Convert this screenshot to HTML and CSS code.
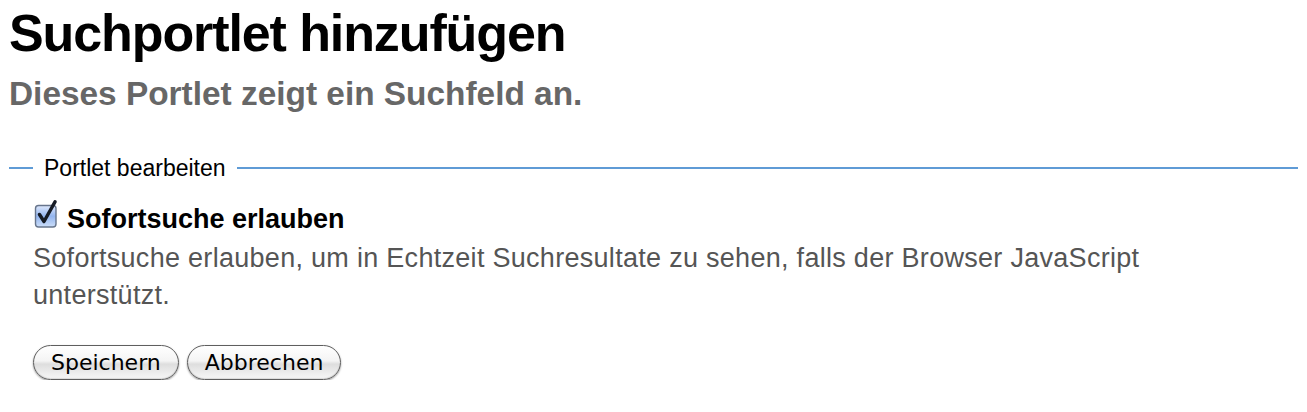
FILE: index.html
```html
<!DOCTYPE html>
<html lang="de">
<head>
<meta charset="utf-8">
<title>Suchportlet hinzufügen</title>
<link rel="stylesheet" href="styles.css">
</head>
<body>
<main class="page">
  <h1 class="title">Suchportlet hinzufügen</h1>
  <p class="lead">Dieses Portlet zeigt ein Suchfeld an.</p>
  <form class="form">
    <fieldset class="fieldset">
      <legend class="legend">Portlet bearbeiten</legend>
      <div class="field">
        <label class="check-label">
          <span class="checkbox" aria-hidden="true">
            <svg width="24" height="28" viewBox="0 0 24 28">
              <defs>
                <linearGradient id="cbg" x1="0" y1="0" x2="0" y2="1">
                  <stop offset="0" stop-color="#dfe9fc"/>
                  <stop offset="0.5" stop-color="#93b5ef"/>
                  <stop offset="1" stop-color="#cddff9"/>
                </linearGradient>
              </defs>
              <rect x="2.5" y="5.5" width="20.5" height="21.5" rx="3" fill="url(#cbg)" stroke="#67758c" stroke-width="1.4"/>
              <path d="M6.5 14.5 L11 21.5 L22 1.8" fill="none" stroke="#161b24" stroke-width="3.4" stroke-linecap="round" stroke-linejoin="round"/>
            </svg>
          </span>
          <span class="check-text">Sofortsuche erlauben</span>
        </label>
        <div class="help">Sofortsuche erlauben, um in Echtzeit Suchresultate zu sehen, falls der Browser JavaScript unterstützt.</div>
      </div>
      <div class="actions">
        <button type="button" class="btn">Speichern</button>
        <button type="button" class="btn">Abbrechen</button>
      </div>
    </fieldset>
  </form>
</main>
</body>
</html>
```
FILE: styles.css
```css
html, body {
  margin: 0;
  padding: 0;
  background: #fff;
}
body {
  font-family: "Liberation Sans", Arial, sans-serif;
  color: #000;
}
.page {
  padding: 0 9px;
}
.title {
  margin: 0;
  padding-top: 3px;
  font-size: 52px;
  line-height: 60px;
  font-weight: bold;
  letter-spacing: -1.1px;
}
.lead {
  margin: 11px 0 0;
  font-size: 33.4px;
  line-height: 40px;
  font-weight: bold;
  color: #676767;
}
.form {
  margin-top: 41px;
}
.fieldset {
  margin: 0;
  padding: 23px 0 0 24px;
  border: none;
  border-top: 2px solid #5f9bd6;
  min-width: 0;
}
.legend {
  padding: 0 11px 0 11px;
  font-size: 23px;
  line-height: 26px;
  color: #000;
}
.check-label {
  display: flex;
  align-items: flex-start;
  gap: 10px;
  font-weight: bold;
  font-size: 27px;
  line-height: 30px;
}
.checkbox {
  display: inline-flex;
  width: 24px;
  height: 28px;
  margin-top: -4px;
}
.help {
  margin-top: 6px;
  font-size: 27px;
  line-height: 37px;
  letter-spacing: 0.29px;
  color: #555;
  max-width: 1160px;
}
.actions {
  display: flex;
  gap: 8px;
  margin-top: 31px;
}
.btn {
  font-family: "DejaVu Sans", sans-serif;
  font-size: 22px;
  color: #000;
  height: 35px;
  padding: 0 17px;
  border-radius: 18px;
  border: 1px solid #5e5e5e;
  background: linear-gradient(#ffffff 0%, #f4f4f4 45%, #dedede 55%, #f7f7f7 100%);
  box-shadow: 0 1px 2px rgba(0,0,0,0.4), inset 0 -1px 1px rgba(0,0,0,0.12);
  cursor: pointer;
}
```
